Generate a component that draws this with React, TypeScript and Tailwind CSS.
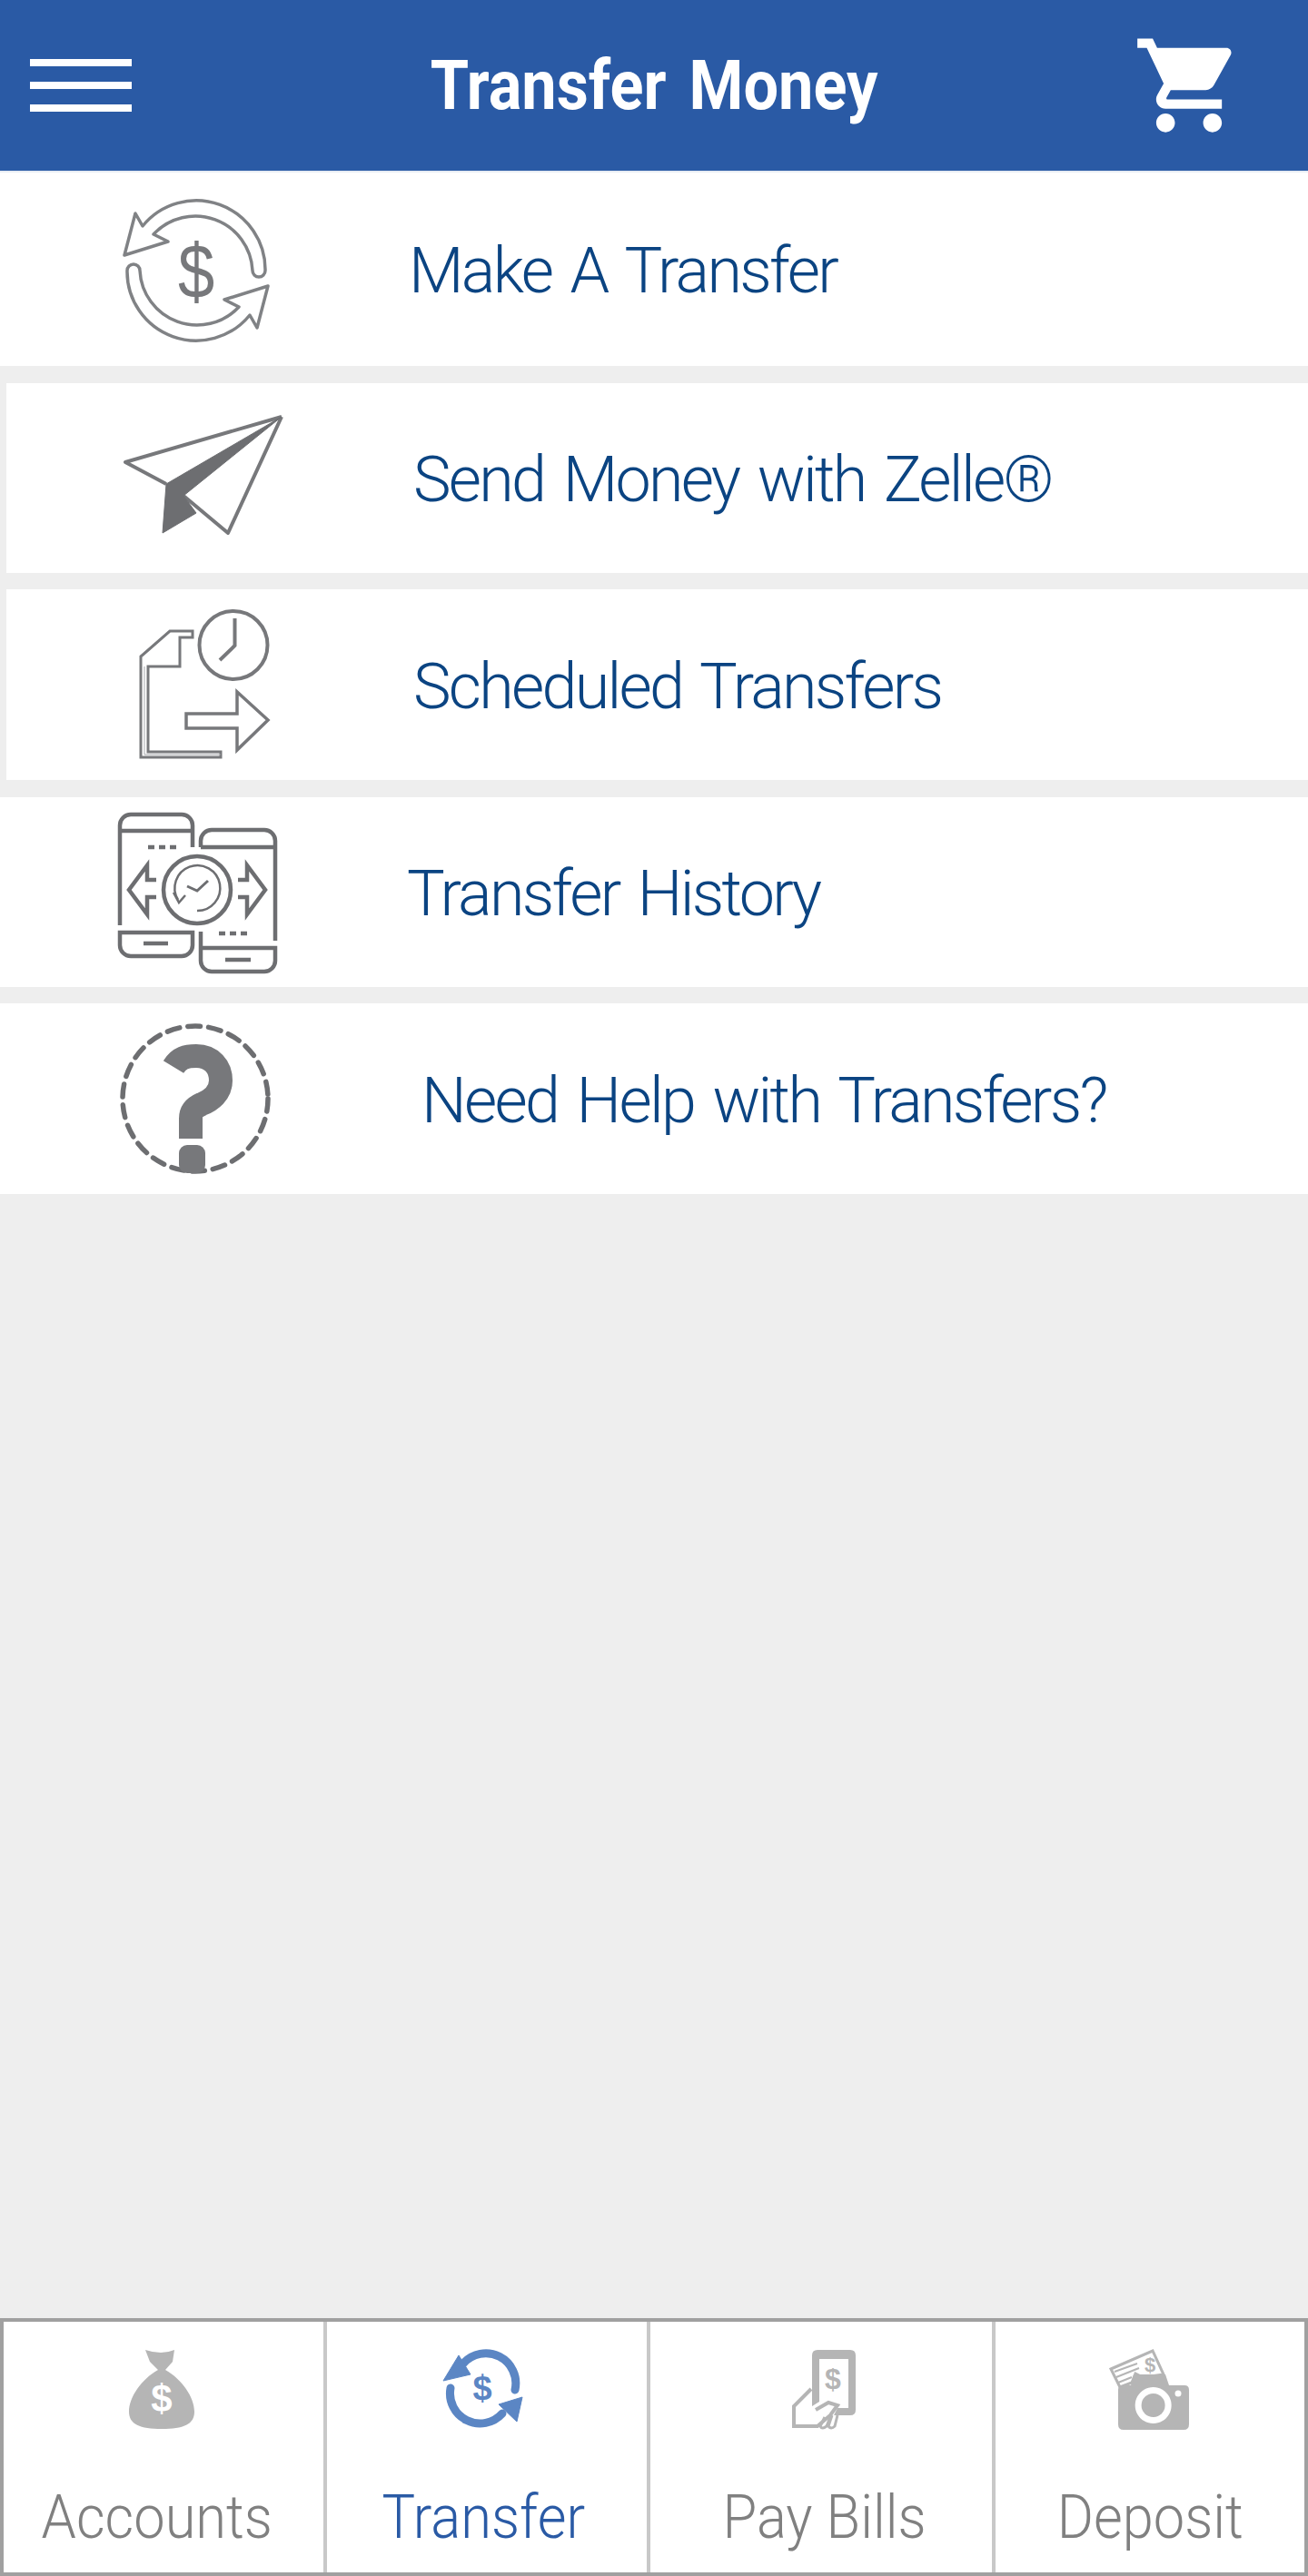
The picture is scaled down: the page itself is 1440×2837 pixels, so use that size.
const BLUE = "#2a5aa5";

function Hamburger() {
  return (
    <div className="flex w-[112px] flex-col gap-[17px]">
      <div className="h-[8px] bg-white" />
      <div className="h-[8px] bg-white" />
      <div className="h-[8px] bg-white" />
    </div>
  );
}

function Cart() {
  return (
    <svg className="h-[124px] w-[124px]" viewBox="0 0 24 24" fill="#fff">
      <path d="M7 18c-1.1 0-1.99.9-1.99 2S5.9 22 7 22s2-.9 2-2-.9-2-2-2zM1 2v2h2l3.6 7.59-1.35 2.45c-.16.28-.25.61-.25.96 0 1.1.9 2 2 2h12v-2H7.42c-.14 0-.25-.11-.25-.25l.03-.12.9-1.63h7.45c.75 0 1.41-.41 1.75-1.03l3.58-6.47c.08-.14.12-.31.12-.48 0-.55-.45-1-1-1H5.21l-.94-2H1zm16 16c-1.1 0-1.99.9-1.99 2s.89 2 1.99 2 2-.9 2-2-.9-2-2-2z" />
    </svg>
  );
}

function IconTransfer() {
  const arm = "M149 234 L137 280 L185 265 L169 257 A 63 63 0 0 1 278 297 A 7 7 0 0 0 292 297 A 76 76 0 0 0 157 248 Z";
  return (
    <svg className="h-[215px] w-[440px] shrink-0" viewBox="0 187 440 215" fill="none" stroke="#808285" strokeWidth="3.5" strokeLinejoin="round">
      <path d={arm} />
      <path d={arm} transform="rotate(180 216 297)" />
      <text transform="translate(216 327) scale(0.95 1.12)" textAnchor="middle" fontSize="76" fill="#77787b" stroke="none" fontFamily="'Liberation Sans', sans-serif">$</text>
    </svg>
  );
}

function IconPlane() {
  return (
    <svg className="h-[209px] w-[433px] shrink-0" viewBox="7 421 433 209" fill="none" stroke="#77787b" strokeWidth="4" strokeLinejoin="round">
      <path d="M310 458 L138 508 L183 532 M202 545 L251 586 L310 458" />
      <path d="M310 458 L183 532 L179 586 L216 564 L202 545 Z" fill="#6d6e71" stroke="#6d6e71" strokeWidth="1" />
    </svg>
  );
}

function IconScheduled() {
  return (
    <svg className="h-[210px] w-[433px] shrink-0" viewBox="7 649 433 210" fill="none" stroke="#77787b" strokeWidth="4">
      <circle cx="257" cy="710.5" r="37.5" />
      <path d="M258.5 681 V711 L242 727" />
      <path d="M212 695 H187 L155 723 V834 H243 V828 H163 V734 H198 V702 H212 Z" strokeWidth="3" />
      <path d="M159 734 V831 H243" strokeWidth="1" stroke="#a7a9ac" />
      <path d="M205 786 H261 V762 L295 793 L261 826 V802 H205 Z" strokeWidth="3.5" />
    </svg>
  );
}

function IconHistory() {
  return (
    <svg className="h-[209px] w-[440px] shrink-0" viewBox="0 877 440 209" fill="none" stroke="#6d6e71" strokeWidth="4.5">
      <path d="M132 1018 V908 a12 12 0 0 1 12 -12 H200 a12 12 0 0 1 12 12 V932 M132 914 H212" />
      <path d="M132 1026 H212 V1040 a12 12 0 0 1 -12 12 H144 a12 12 0 0 1 -12 -12 Z M158 1038 H185" />
      <path d="M163 932 H170 M175 932 H182 M187 932 H194" />
      <path d="M221 932 V925 a12 12 0 0 1 12 -12 H291 a12 12 0 0 1 12 12 V1035 M221 932 H303" />
      <path d="M221 1025 V1057 a12 12 0 0 0 12 12 H291 a12 12 0 0 0 12 -12 V1043 H221 M248 1056 H276" />
      <path d="M241 1027 H248 M253 1027 H260 M265 1027 H272" />
      <circle cx="217" cy="979" r="37" />
      <path d="M196 990 A 25 25 0 1 1 217 1002" strokeWidth="2.5" />
      <path d="M191 982 L197 993 L204 985" strokeWidth="2.5" />
      <path d="M206 975 L217 980 L229 969" strokeWidth="3" />
      <path d="M172 968 H162 V952 L142 979 L162 1006 V987 H172" />
      <path d="M262 968 H272 V952 L292 979 L272 1006 V987 H262" />
    </svg>
  );
}

function IconHelp() {
  return (
    <svg className="h-[210px] w-[440px] shrink-0" viewBox="0 1105 440 210" fill="none" stroke="#6d6e71">
      <circle cx="215" cy="1210" r="80" strokeWidth="5.5" strokeDasharray="14 9" strokeLinecap="round" />
      <path d="M191 1175 C197 1165 205 1163 216 1163 C233 1163 243 1175 243 1190 C243 1204 232 1212 222 1216 C213 1220 210 1224 210 1232 V1254" strokeWidth="26" stroke="#77787b" />
      <rect x="197" y="1261" width="29" height="31" rx="9" fill="#77787b" stroke="none" />
    </svg>
  );
}

function TabBag() {
  return (
    <svg className="h-[96px] w-[352px]" viewBox="4 2584 352 96" fill="#b5b5b5">
      <path d="M160 2588 Q178 2594 192 2588 L190 2601 L182 2610 C200 2620 214 2640 214 2656 C214 2670 202 2675 178 2675 C154 2675 142 2670 142 2656 C142 2640 156 2620 174 2610 L165 2601 Z" />
      <text x="178" y="2656" textAnchor="middle" fontSize="42" fontWeight="700" fill="#fff" fontFamily="'Liberation Sans', sans-serif">$</text>
    </svg>
  );
}

function TabTransfer() {
  return (
    <svg className="h-[96px] w-[352px]" viewBox="360 2584 352 96" fill="none" stroke="#5b86c4">
      <path d="M510 2603 A 33 33 0 0 1 567 2632" strokeWidth="9" strokeLinecap="round" />
      <path d="M505 2594 L488 2622 L518 2615 Z" fill="#5b86c4" strokeWidth="1" />
      <path d="M553 2658 A 33 33 0 0 1 496 2630" strokeWidth="9" strokeLinecap="round" />
      <path d="M575 2640 L549 2648 L569 2667 Z" fill="#5b86c4" strokeWidth="1" />
      <text x="531" y="2643" textAnchor="middle" fontSize="38" fontWeight="700" fill="#5b86c4" stroke="none" fontFamily="'Liberation Sans', sans-serif">$</text>
    </svg>
  );
}

function TabBills() {
  return (
    <svg className="h-[96px] w-[376px]" viewBox="716 2584 376 96" fill="#b5b5b5">
      <path fillRule="evenodd" d="M900 2588 H936 Q942 2588 942 2594 V2654 Q942 2660 936 2660 H918 L922 2652 H934 V2598 H902 V2645 L894 2650 V2594 Q894 2588 900 2588 Z" />
      <text x="917" y="2631" textAnchor="middle" fontSize="32" fontWeight="700" fill="#b5b5b5" fontFamily="'Liberation Sans', sans-serif">$</text>
      <path d="M893 2631 L874 2650 V2672 H900 L914 2660 L922 2649 L912 2646 L898 2654" fill="none" stroke="#b5b5b5" strokeWidth="4" />
      <path d="M908 2662 L903 2672 Q905 2676 910 2672 L914 2662 M916 2660 L912 2672 Q915 2676 919 2672 L922 2660" fill="none" stroke="#b5b5b5" strokeWidth="3" />
    </svg>
  );
}

function TabDeposit() {
  return (
    <svg className="h-[96px] w-[340px]" viewBox="1096 2584 340 96" fill="#b5b5b5">
      <path d="M1223 2609 L1269 2589 L1281 2615 L1258 2618 L1250 2614 L1246 2624 L1233 2629 Z" fill="none" stroke="#b5b5b5" strokeWidth="3" />
      <path d="M1227 2612 L1252 2603 M1229 2618 L1254 2608 M1231 2624 L1246 2618" fill="none" stroke="#b5b5b5" strokeWidth="2" />
      <text x="1266" y="2612" textAnchor="middle" fontSize="22" fontWeight="700" fill="#b5b5b5" fontFamily="'Liberation Sans', sans-serif">$</text>
      <path fillRule="evenodd" d="M1248 2615 H1283 L1287 2627 H1304 Q1309 2627 1309 2632 V2670 Q1309 2676 1303 2676 H1237 Q1231 2676 1231 2670 V2632 Q1231 2627 1236 2627 H1245 Z M1269.6 2629 a20 20 0 1 0 0.1 0 Z" />
      <circle cx="1269.6" cy="2649" r="13" />
      <circle cx="1297" cy="2636" r="3.5" fill="#fff" />
    </svg>
  );
}

function Row({ icon, label, inset, h, ml }: { icon: React.ReactNode; label: string; inset?: boolean; h: string; ml: string }) {
  return (
    <div className={`flex items-center bg-white ${h} ${inset ? "ml-[7px]" : ""}`}>
      {icon}
      <span className={`whitespace-nowrap pt-[4px] text-[70px] leading-none font-light text-[#0b4482] [font-family:Roboto,sans-serif] [word-spacing:6px] tracking-[-2.7px] ${ml}`}>{label}</span>
    </div>
  );
}

function Tab({ icon, label, active, w, divider, shift }: { icon: React.ReactNode; label: string; active?: boolean; w: string; divider?: boolean; shift?: string }) {
  return (
    <div className={`flex flex-col items-center pt-[27px] ${w} ${divider ? "border-r-[4px] border-[#c8c8c8]" : ""}`}>
      {icon}
      <span className={`mt-[60px] inline-block whitespace-nowrap text-[66px] leading-none font-light [font-family:Roboto,sans-serif] scale-x-[0.93] ${shift ?? ""} ${active ? "text-[#2a5aa5]" : "text-[#808080]"}`}>{label}</span>
    </div>
  );
}

export default function App() {
  return (
    <div className="flex h-[2837px] w-[1440px] flex-col bg-[#eeeeee]">
      <header className="relative z-10 flex h-[188px] shrink-0 items-center pl-[33px] pr-[69px] shadow-[0_2px_0_#e8edf4]" style={{ backgroundColor: BLUE }}>
        <div className="w-[160px] shrink-0"><Hamburger /></div>
        <h1 className="flex-1 scale-x-[0.9] text-center text-[76px] leading-none font-bold whitespace-nowrap text-white [font-family:Roboto,sans-serif] [word-spacing:9px]">Transfer Money</h1>
        <Cart />
      </header>
      <div className="flex flex-col gap-[18.5px]">
        <Row h="h-[215px]" ml="ml-[10px]" icon={<IconTransfer />} label="Make A Transfer" />
        <Row inset h="h-[209px]" ml="ml-[15px]" icon={<IconPlane />} label="Send Money with Zelle®" />
        <Row inset h="h-[210px]" ml="ml-[15px]" icon={<IconScheduled />} label="Scheduled Transfers" />
        <Row h="h-[209px]" ml="ml-[8px]" icon={<IconHistory />} label="Transfer History" />
        <Row h="h-[210px]" ml="ml-[24px]" icon={<IconHelp />} label="Need Help with Transfers?" />
      </div>
      <div className="flex-1" />
      <nav className="flex h-[284px] shrink-0 border-[4px] border-[#a0a0a0] bg-white">
        <Tab w="w-[356px]" divider icon={<TabBag />} label="Accounts" shift="mr-[14px]" />
        <Tab w="w-[356px]" divider active icon={<TabTransfer />} label="Transfer" shift="mr-[7px]" />
        <Tab w="w-[380px]" divider icon={<TabBills />} label="Pay Bills" shift="ml-[7px]" />
        <Tab w="flex-1" icon={<TabDeposit />} label="Deposit" />
      </nav>
    </div>
  );
}
